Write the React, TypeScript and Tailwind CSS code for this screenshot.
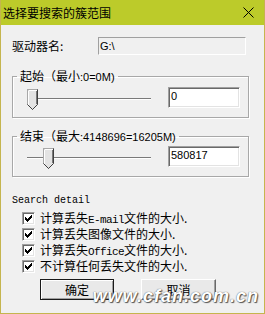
import React from "react";

const CJK = "font-['Noto_Sans_CJK_SC',sans-serif]";

function Slider({ pos }: { pos: number }) {
  return (
    <div className="relative w-[124px] h-[21px] ml-[14px] mt-[2px] shrink-0">
      <div className="absolute left-0 right-0 top-[9px] h-[2px] border-t border-t-[#7a7a7a] border-b border-b-white" />
      <svg className="absolute top-0" style={{ left: pos }} width="11" height="21" viewBox="0 0 11 21" shapeRendering="crispEdges">
        <polygon points="0.5,0.5 10.5,0.5 10.5,15.5 5.5,20.5 0.5,15.5" fill="#e3e3e3" stroke="#a8a8a8" />
        <polyline points="1.5,1.5 9.5,1.5" stroke="#ffffff" fill="none" />
        <polyline points="1.5,1.5 1.5,15.5" stroke="#ffffff" fill="none" />
        <polyline points="10.5,0.5 10.5,15.5 5.5,20.5 0.5,15.5" stroke="#404040" fill="none" shapeRendering="auto" />
        <polyline points="9.5,1.5 9.5,15" stroke="#7a7a7a" fill="none" />
      </svg>
    </div>
  );
}

function Edit({ value }: { value: string }) {
  return (
    <div className="ml-[17px] w-[72px] h-[21px] bg-white border border-t-[#a0a0a0] border-l-[#a0a0a0] border-b-white border-r-white shadow-[inset_1px_1px_0_#696969,inset_-1px_-1px_0_#e3e3e3] pl-[2px] pt-[1px] font-['Liberation_Sans',sans-serif] text-[11px] leading-[14px] text-black">
      {value}
    </div>
  );
}

function Check({ children }: { children: React.ReactNode }) {
  return (
    <div className="flex items-center h-[16px]">
      <div className="w-[13px] h-[13px] bg-white border border-t-[#a0a0a0] border-l-[#a0a0a0] border-b-white border-r-white shadow-[inset_1px_1px_0_#696969,inset_-1px_-1px_0_#e3e3e3] flex items-center justify-center shrink-0">
        <svg width="7" height="7" viewBox="0 0 7 7" shapeRendering="crispEdges">
          {[2, 3, 4, 3, 2, 1, 0].map((y, i) => (
            <rect key={i} x={i} y={y} width={1} height={3} fill="#000" />
          ))}
        </svg>
      </div>
      <p className={`ml-[5px] h-[16px] ${CJK} text-[12px] leading-[16px] text-black whitespace-nowrap`}>{children}</p>
    </div>
  );
}

const Mono = ({ children }: { children: React.ReactNode }) => (
  <span className="font-['Liberation_Mono',monospace] text-[11px] leading-[10px] tracking-[-0.6px]">{children}</span>
);

export default function App() {
  return (
    <div className="relative w-[265px] h-[314px] bg-[#f0f0f0] border-l border-r border-b border-[#c5b54e] flex flex-col overflow-hidden">
      {/* Title bar */}
      <div className="h-[25px] bg-[#bccb2a] flex items-center justify-between pl-[2px] pr-[10px] shrink-0">
        <span className={`${CJK} text-[12px] leading-[14px] text-black`}>选择要搜索的簇范围</span>
        <svg width="11" height="11" viewBox="0 0 11 11">
          <path d="M0.5 0.5 L10.5 10.5 M10.5 0.5 L0.5 10.5" stroke="#000" strokeWidth="1" />
        </svg>
      </div>

      {/* Drive row */}
      <div className="flex items-center pl-[11px] mt-[12px] shrink-0">
        <span className={`w-[86px] ${CJK} text-[12px] leading-[14px] text-black`}>驱动器名:</span>
        <div className="w-[148px] h-[18px] bg-[#f0f0f0] border border-t-[#a0a0a0] border-l-[#a0a0a0] border-b-white border-r-white pl-[1px] pt-[1px] font-['Liberation_Sans',sans-serif] text-[11px] leading-[14px] text-black">
          G:\
        </div>
      </div>

      {/* Group 1 */}
      <fieldset className="ml-[11px] w-[237px] mt-[14px] border border-[#a8a8a8] shadow-[inset_1px_1px_0_#fff,1px_1px_0_#fff] pt-[4px] pb-[7px] shrink-0">
        <legend className={`ml-[4px] px-[3px] h-[14px] ${CJK} text-[12px] leading-[14px] text-black`}>
          起始（最小<span className="font-['Liberation_Sans',sans-serif] text-[11px] leading-[14px]">:0=0M)</span>
        </legend>
        <div className="flex items-start">
          <Slider pos={0} />
          <Edit value="0" />
        </div>
      </fieldset>

      {/* Group 2 */}
      <fieldset className="ml-[11px] w-[237px] mt-[11px] border border-[#a8a8a8] shadow-[inset_1px_1px_0_#fff,1px_1px_0_#fff] pt-[3px] pb-[7px] shrink-0">
        <legend className={`ml-[4px] px-[3px] h-[14px] ${CJK} text-[12px] leading-[14px] text-black`}>
          结束（最大<span className="font-['Liberation_Sans',sans-serif] text-[11px] leading-[14px]">:4148696=16205M)</span>
        </legend>
        <div className="flex items-start">
          <Slider pos={16} />
          <Edit value="580817" />
        </div>
      </fieldset>

      {/* Search detail */}
      <div className="pl-[11px] mt-[18px] h-[12px] font-['Liberation_Mono',monospace] text-[10px] leading-[12px] text-black shrink-0">
        Search detail
      </div>
      <div className="pl-[21px] mt-[3px] flex flex-col shrink-0">
        <Check>计算丢失<Mono>E-mail</Mono>文件的大小.</Check>
        <Check>计算丢失图像文件的大小.</Check>
        <Check>计算丢失<Mono>Office</Mono>文件的大小.</Check>
        <Check>不计算任何丢失文件的大小.</Check>
      </div>

      {/* Buttons */}
      <div className="flex pl-[39px] mt-[5px] gap-[27px] shrink-0">
        <div className={`w-[74px] h-[21px] border border-[#1a1a1a] shadow-[inset_1px_1px_0_#fff,inset_-1px_-1px_0_#a0a0a0] bg-[#e9e9e9] flex items-center justify-center ${CJK} text-[12px] leading-[14px] text-black`}>
          确定
        </div>
        <div className={`w-[75px] h-[21px] border border-t-white border-l-white border-b-[#696969] border-r-[#696969] shadow-[inset_-1px_-1px_0_#a0a0a0] bg-[#e9e9e9] flex items-center justify-center ${CJK} text-[12px] leading-[14px] text-black`}>
          取消
        </div>
      </div>

      {/* Watermark */}
      <div className="absolute right-[5px] bottom-[8px] font-['Liberation_Sans',sans-serif] font-bold italic text-[18px] leading-[18px] tracking-[1px] text-white [text-shadow:0_0_1px_#333,1px_1px_1px_#555]">
        www.cfan.com.cn
      </div>
    </div>
  );
}
